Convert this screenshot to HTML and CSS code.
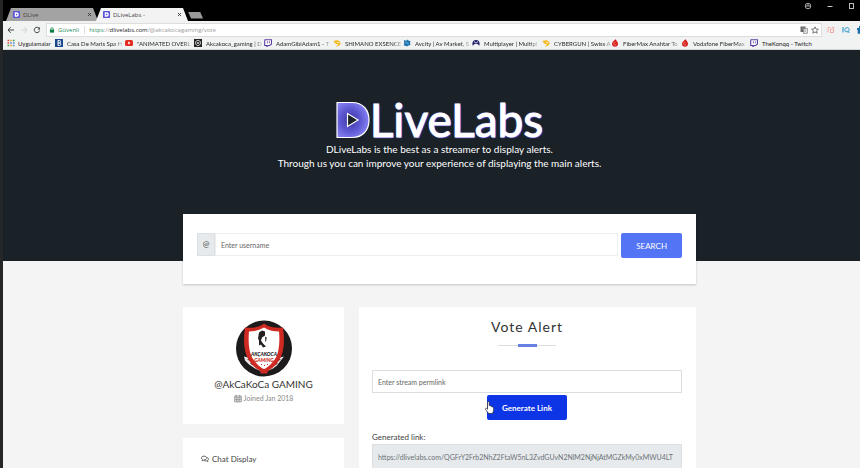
FILE: index.html
```html
<!DOCTYPE html>
<html lang="tr">
<head>
  <meta charset="UTF-8" />
  <meta name="viewport" content="width=device-width, initial-scale=1.0"/>
  <title>DLiveLabs - Vote Alert</title>
  <link rel="stylesheet" href="styles.css">
</head>
<body>
  <svg class="sprite" aria-hidden="true">
    <symbol id="i-dlive" viewBox="0 0 8 8"><rect width="8" height="8" rx="1" fill="#5a55d6"/><path d="M2 1.5h2.2a2.5 2.5 0 0 1 0 5H2z" fill="#fff"/><path d="M3.4 2.8v2.4L5.4 4z" fill="#5a55d6"/></symbol>
    <symbol id="i-close" viewBox="0 0 8 8"><path d="M1.500 1.500l5 5M6.500 1.500l-5 5" stroke="#333" stroke-width="1.300"/></symbol>
    <symbol id="i-twitch" viewBox="0 0 8 8"><path d="M1 .7h6.500v4.300L5.700 6.500H4L2.800 7.700V6.500H.7V2z" fill="#fff" stroke="#5b3fa0" stroke-width="1.100"/><path d="M3.400 2.300v2M5.400 2.300v2" stroke="#5b3fa0" stroke-width=".8"/></symbol>
    <symbol id="i-shop" viewBox="0 0 8 8"><path d="M.5 1.500c1.500 1 2.500-.7 4-.3C6.300 1.600 7.600 3 7.500 4.600 7.300 6.600 5 7.800 2.500 7.400c1.500-.5 2.300-1.200 2.300-2.200C3.200 5.500 1 4 .5 1.500z" fill="#f5b921"/><path d="M4 3.500l2 .3" stroke="#fff" stroke-width=".8"/></symbol>
    <symbol id="i-drop" viewBox="0 0 8 8"><path d="M4.500.3C5.500 1.800 7 3 7 4.800a3 3 0 0 1-6 0C1 3 3 1.800 4.500.3z" fill="#d8221d"/><path d="M4.300 3.400a1.300 1.300 0 1 0 .9 2" stroke="#f3a9a4" stroke-width=".6" fill="none"/></symbol>
  </svg>

  <div class="browser">
    <header class="titlebar">
      <div class="tab tab-idle"><svg class="fav"><use href="#i-dlive"/></svg><span>DLive</span><button aria-label="Close DLive"><svg><use href="#i-close"/></svg></button></div>
      <div class="tab tab-active"><svg class="fav"><use href="#i-dlive"/></svg><span>DLiveLabs -</span><button aria-label="Close DLiveLabs"><svg><use href="#i-close"/></svg></button></div>
      <button class="new-tab" aria-label="New tab"></button>
      <div class="window-buttons">
        <button aria-label="Account"><svg viewBox="0 0 8 8"><circle cx="4" cy="4" r="2.800" fill="none" stroke="#aaa"/><path d="M1.500 4h5M4 2v2" stroke="#aaa"/></svg></button>
        <button aria-label="Minimize"><svg viewBox="0 0 8 8"><path d="M1.500 4.500h5" stroke="#ccc"/></svg></button>
        <button aria-label="Maximize"><svg viewBox="0 0 8 8"><rect x="1.500" y="1.500" width="4" height="5" fill="none" stroke="#bbb"/></svg></button>
      </div>
    </header>

    <div class="toolbar">
      <button aria-label="Back"><svg viewBox="0 0 8 8"><path d="M7 4H1M3.700 1.200L1 4l2.700 2.800" fill="none" stroke="#444"/></svg></button>
      <button aria-label="Forward"><svg viewBox="0 0 8 8"><path d="M1 4H7M4.300 1.200L7 4 4.300 6.800" fill="none" stroke="#d2d2d2"/></svg></button>
      <button aria-label="Reload"><svg viewBox="0 0 8 8"><path d="M6.200 2.400A2.700 2.700 0 1 0 6.600 4.500" fill="none" stroke="#444"/><path d="M7 .9v2.600H4.400z" fill="#444"/></svg></button>
      <div class="omnibox">
        <svg class="lock" viewBox="0 0 8 8"><path d="M2.400 4V2.500a1.600 1.600 0 0 1 3.200 0V4" fill="none" stroke="#0b8043"/><rect x="1.200" y="3.500" width="5.600" height="4" fill="#0b8043"/></svg>
        <span class="secure">Güvenli</span>
        <span class="url"><span class="secure">https</span>://<b>dlivelabs.com</b>/@akcakocagaming/vote</span>
        <svg viewBox="0 0 8 8"><rect width="5" height="5.500" x=".5" y=".5" fill="#666"/><rect x="3.500" y="2.500" width="4" height="5" fill="#eee" stroke="#777" stroke-width=".6"/><path d="M1.500 4.300L3 1.500l1 2.500M4.500 4h2M5.500 3.500L4.500 6.500M5 5l1.500 1.500" stroke="#999" stroke-width=".6" fill="none"/></svg>
        <svg viewBox="0 0 8 8"><path d="M4 .8l1 2.200 2.400.2-1.800 1.600.6 2.400L4 6 1.800 7.200l.6-2.400L.6 3.200 3 3z" fill="none" stroke="#555" stroke-width=".8"/></svg>
      </div>
      <div class="extensions">
        <svg viewBox="0 0 8 8"><path d="M1 1.500v5M1 1.500h2.500M3.500 3v4M3.500 3h3v3.500h-3M5 1l2.500 1" fill="none" stroke="#efa9a4"/></svg>
        <svg viewBox="0 0 8 8"><path d="M1 1v5.500" stroke="#3b9bd0" stroke-width="1.200"/><circle cx="5" cy="3.800" r="2.200" fill="none" stroke="#3b9bd0"/><path d="M5.300 4.700l2 2.300" stroke="#3b9bd0"/></svg>
        <svg viewBox="0 0 8 8"><path d="M0 2h8v2H0zM.7 4h6.600v3.700H.7zM2 0h4v2H2z" fill="#1b6fa8"/></svg>
      </div>
    </div>

    <nav class="bookmarks">
      <a href="#" class="apps"><svg viewBox="0 0 8 8"><path d="M.5 1.500h1.700M.5 4h1.700" stroke="#d9503f" stroke-width="1.600"/><path d="M3.200 1.500h1.700M3.200 6.500h1.700" stroke="#e3a62f" stroke-width="1.600"/><path d="M5.900 1.500h1.700M.5 6.500h1.700" stroke="#4a9c59" stroke-width="1.600"/><path d="M3.200 4h1.700M5.900 4h1.700M5.900 6.500h1.700" stroke="#5f8fd3" stroke-width="1.600"/></svg><span>Uygulamalar</span></a>
      <a href="#"><svg viewBox="0 0 8 8"><rect width="8" height="8" fill="#174a8c"/><path d="M3 1.500v5h1.500a1.200 1.200 0 0 0 0-2.500H3M3 1.500h1.300a1.200 1.200 0 0 1 0 2.500" fill="none" stroke="#fff"/></svg><span>Casa De Maris Spa H</span></a>
      <a href="#"><svg viewBox="0 0 8 8"><rect y="1" width="8" height="6" rx="1.500" fill="#e32b22"/><path d="M3.200 2.600v2.800L5.600 4z" fill="#fff"/></svg><span>"ANIMATED OVERL</span></a>
      <a href="#"><svg viewBox="0 0 8 8"><rect width="8" height="8" fill="#222"/><path d="M4 1.200l2.300 1.300v2.800L4 6.800 1.700 5.300V2.500z" fill="none" stroke="#eee" stroke-width=".8"/><circle cx="4" cy="4" r=".9" fill="#eee"/></svg><span>Akcakoca_gaming | D</span></a>
      <a href="#"><svg><use href="#i-twitch"/></svg><span>AdamGibiAdam1 - T</span></a>
      <a href="#"><svg><use href="#i-shop"/></svg><span>SHIMANO EXSENCE</span></a>
      <a href="#"><svg viewBox="0 0 8 8"><path d="M1 1l2 .7L5 .6l.6 1.200L7.500 2 7 4l.5 2-2 .4L4 7.500 2.500 6.800.7 6.500 1.200 4z" fill="#2474ad"/><path d="M2.500 3.500l3 1" stroke="#68b2dc"/></svg><span>Avcity | Av Market, S</span></a>
      <a href="#"><svg viewBox="0 0 8 8"><path d="M.7 6.800C-.3 3.500 1 1 4 1s4.300 2.500 3.300 5.800L5.500 5h-3z" fill="#25256e"/><path d="M2 2.500l2 1.700 2-1.700" fill="none" stroke="#fff" stroke-width=".8"/></svg><span>Multiplayer | Multipl</span></a>
      <a href="#"><svg><use href="#i-shop"/></svg><span>CYBERGUN | Swiss A</span></a>
      <a href="#"><svg><use href="#i-drop"/></svg><span>FiberMax Anahtar To</span></a>
      <a href="#"><svg><use href="#i-drop"/></svg><span>Vodafone FiberMax</span></a>
      <a href="#"><svg><use href="#i-twitch"/></svg><span>TheKonqq - Twitch</span></a>
    </nav>

    <main>
      <section class="hero">
        <h1 class="logo">
          <svg viewBox="0 0 34 38" role="img" aria-label="D">
            <defs><radialGradient id="dfill" cx=".42" cy=".5" r=".6"><stop offset="0" stop-color="#3e36a4"/><stop offset=".5" stop-color="#5b55cf"/><stop offset="1" stop-color="#8985f5"/></radialGradient></defs>
            <path d="M1 1.500H16C27 1.500 33 9 33 19s-6 17.500-17 17.500H1z" fill="url(#dfill)" stroke="#fff" stroke-width="1.200"/>
            <path d="M11.500 12.500v13L22 19z" fill="#1a2129" stroke="#fff" stroke-width="1.200"/>
          </svg><span>LiveLabs</span>
        </h1>
        <p>DLiveLabs is the best as a streamer to display alerts.<br>Through us you can improve your experience of displaying the main alerts.</p>
      </section>

      <div class="container">
        <form class="card search">
          <label for="username">@</label>
          <input type="text" id="username" placeholder="Enter username" />
          <button type="button" class="btn">SEARCH</button>
        </form>

        <div class="row">
          <aside>
            <div class="card profile">
              <svg class="avatar" viewBox="0 0 56 56" aria-hidden="true">
                <circle cx="28" cy="28" r="28" fill="#1d1a1b"/>
                <path d="M8 36l8 2-5 1 7 3-4 1 7 4 7 5 7-5 7-4-4-1 7-3-5-1 8-2-4 5-3 4-4 3-9 4-9-4-6-4-4-4z" fill="#e9e7e7"/>
                <path d="M28 3c5 4 12 5 19 4 2 14 1 25-4 33-4 6-9 10-15 12-6-2-11-6-15-12C8 32 7 21 9 7c7 1 14 0 19-4z" fill="#cf2a22"/>
                <path d="M28 7c5 3 10 4 15 4 1 11 0 20-3 26-3 5-7 9-12 12-5-3-9-7-12-12-3-6-4-15-3-26 5 0 10-1 15-4z" fill="#fff"/>
                <path d="M23 12l3-2 3 1v4l-3 2-1 3 2 3 3 3-3 1-2-3-2 1v-5l-1-2z" fill="#242021"/>
                <path d="M29 16l2 1-1 4h-1z" fill="#555"/>
                <path d="M24 51l4-3 4 3-1 2h-6z" fill="#cf2a22"/>
                <text x="28" y="35" class="crest">AKÇAKOCA</text>
                <text x="28" y="41" class="crest crest-red">GAMING</text>
                <path d="M25 44h1M28 45h1M31 44h1" stroke="#cf2a22"/>
              </svg>
              <h2>@AkCaKoCa GAMING</h2>
              <p><svg viewBox="0 0 9 9"><path d="M.8 1.800h7.400v6.500H.8zM.8 3.600h7.400M2.600.3v2M6.400.3v2M.8 5.900h7.400M3.200 3.600v4.700M5.700 3.600v4.700" fill="none" stroke="#777" stroke-width=".8"/></svg>Joined Jan 2018</p>
            </div>
            <nav class="card menu">
              <a href="#"><svg viewBox="0 0 9 8"><path d="M3.500.8C5.300.8 6.500 1.600 6.500 2.900S5.300 5 3.500 5L1.300 6l.4-1.300C.9 4.300.5 3.600.5 2.900.5 1.600 1.700.8 3.500.8z" fill="none" stroke="#444" stroke-width=".9"/><path d="M7.200 2.300c1.500.9 1.600 2.500.3 3.300l.4 1.200-1.700-.7c-1 .2-2 .1-2.700-.3" fill="none" stroke="#444" stroke-width=".9"/></svg>Chat Display</a>
            </nav>
          </aside>

          <section class="card alert">
            <h2>Vote Alert</h2>
            <div class="divider"></div>
            <input type="text" id="permlink" aria-label="Stream permlink" placeholder="Enter stream permlink" />
            <div class="action">
              <button type="button" class="btn btn-dark">Generate Link</button>
              <svg class="pointer" viewBox="0 0 9 13"><path d="M2.500 7V1.500c0-1.300 1.700-1.300 1.700 0v3c1 0 1.500.3 1.700.8.900-.1 1.400.2 1.500.8.800 0 1.200.3 1.200 1v2.500L7.500 12.500H3.700L.6 8.500C0 7.500 1 6.800 1.700 7.400l.8.8z" fill="#fff" stroke="#222" stroke-width=".7"/></svg>
            </div>
            <label for="generated">Generated link:</label>
            <input type="text" id="generated" readonly value="https://dlivelabs.com/QGFrY2Frb2NhZ2FtaW5nL3ZvdGUvN2NlM2NjNjAtMGZkMy0xMWU4LT" />
          </section>
        </div>
      </div>
    </main>
  </div>
</body>
</html>
```
FILE: styles.css
```css
* {
  box-sizing: border-box;
}

body {
  margin: 0;
  height: 100vh;
  overflow: hidden;
  background: #242628;
  font-family: Lato, "Open Sans", sans-serif;
  font-size: 8px;
  color: #444;
}

button, input {
  font-family: inherit;
}

a {
  color: inherit;
  text-decoration: none;
}

svg {
  flex: none;
}

.sprite {
  position: absolute;
  width: 0;
  height: 0;
}

.browser {
  margin-left: 3px;
  min-height: 100vh;
  background: #f4f4f4;
}

.titlebar, .toolbar, .bookmarks {
  display: flex;
  align-items: center;
  font-size: 6px;
}

.titlebar, .toolbar {
  font-family: "Open Sans", sans-serif;
}

.titlebar button, .toolbar button {
  display: flex;
  padding: 0;
  border: none;
  background: none;
}

.titlebar {
  height: 21px;
  padding: 0 4px 0 3px;
  background: #000;
}

.tab {
  display: flex;
  align-items: center;
  align-self: flex-end;
  gap: 3px;
  width: 92px;
  height: 13px;
  padding: 0 6px 0 7px;
  background: #a3a3a3;
  clip-path: polygon(0 100%, 5px 0, calc(100% - 5px) 0, 100% 100%);
}

.tab-active {
  margin-left: -2px;
  background: #f3f3f3;
}

.tab span {
  flex: 1;
}

.fav {
  width: 7px;
  height: 7px;
}

.tab button svg {
  width: 5px;
  height: 5px;
}

.titlebar .new-tab {
  width: 15px;
  height: 7px;
  margin-top: 9px;
  background: #9a9a9a;
  clip-path: polygon(0 0, 12px 0, 100% 100%, 3px 100%);
}

.window-buttons {
  display: flex;
  gap: 14px;
  margin: 0 0 9px auto;
}

.window-buttons svg {
  width: 8px;
  height: 8px;
}

.toolbar {
  gap: 5px;
  height: 17px;
  padding-left: 4px;
  background: #f1f2f2;
}

.toolbar svg {
  width: 8px;
  height: 8px;
}

.omnibox {
  display: flex;
  flex: 1;
  align-items: center;
  gap: 3px;
  height: 14px;
  padding: 0 2px;
  background: #fff;
  border: 1px solid #ddd;
}

.omnibox .lock {
  width: 6px;
  height: 6px;
}

.secure {
  color: #2b8f59;
}

.url {
  flex: 1;
  margin-left: 2px;
  padding-left: 4px;
  border-left: 1px solid #ddd;
  color: #999;
}

.url b {
  font-weight: normal;
  color: #222;
}

/* the last icon is cut by the screen edge */
.extensions {
  display: flex;
  gap: 7px;
  width: 33px;
  overflow: hidden;
}

.bookmarks {
  height: 12px;
  padding: 0 0 1px 4px;
  background: #f1f2f2;
  border-bottom: 1px solid #d5d8da;
  color: #222;
}

.bookmarks a {
  display: flex;
  align-items: center;
  gap: 4px;
  width: 69px;
  white-space: nowrap;
}

.bookmarks a:nth-child(even) {
  width: 70px;
}

.bookmarks .apps {
  width: 48px;
  gap: 3px;
}

.bookmarks svg {
  width: 8px;
  height: 8px;
}

.bookmarks span {
  background: linear-gradient(to right, #222 85%, #bbb);
  background-clip: text;
  color: transparent;
}

.bookmarks .apps span, .bookmarks a:last-child span {
  background: none;
  color: #222;
}

.hero {
  height: 211px;
  padding: 48px 0 0 16px;
  background: #1a2228;
  color: #fff;
  text-align: center;
}

.logo {
  display: flex;
  justify-content: center;
  align-items: center;
  height: 44px;
  margin: 0;
  font-size: 46px;
  font-weight: normal;
  line-height: 44px;
  text-shadow: 0 0 2px #6a60f0, 1px 1px 1px #5a50d8;
  -webkit-text-stroke: 1px #fff;
}

.logo svg {
  width: 34px;
  height: 38px;
}

.hero p {
  margin: 0;
  font-size: 10px;
  line-height: 14px;
}

.container {
  max-width: 529px;
  margin: -47px auto 0;
  padding-left: 16px;
}

.card {
  background: #fff;
}

.search {
  display: flex;
  align-items: flex-start;
  height: 70px;
  padding: 19px 14px;
  box-shadow: 0 1px 2px rgba(0, 0, 0, .2);
}

.search label {
  width: 18px;
  height: 23px;
  background: #e7eaec;
  border: 1px solid #dde0e3;
  line-height: 21px;
  text-align: center;
}

input {
  width: 100%;
  height: 23px;
  padding: 0 5px;
  border: 1px solid #dcdfe2;
  background: #fff;
  color: #6b7278;
  font-size: 7px;
  outline: none;
}

input::placeholder {
  color: #666;
}

.search input {
  flex: 1;
  margin-right: 3px;
  border-color: #eceef0;
}

.btn {
  height: 25px;
  padding: 0 15px;
  border: none;
  border-radius: 2px;
  background: #5374f5;
  color: #fff;
  font-size: 8px;
  cursor: pointer;
}

.row {
  display: grid;
  grid-template-columns: repeat(3, 1fr);
  gap: 15px;
  align-items: start;
  margin-top: 23px;
}

.profile {
  height: 117px;
  padding-top: 13px;
  text-align: center;
}

.avatar {
  display: block;
  width: 56px;
  height: 57px;
  margin: 0 auto;
}

.crest {
  fill: #1a1718;
  font: italic 900 5px Lato, sans-serif;
  text-anchor: middle;
}

.crest-red {
  fill: #cf2a22;
}

.profile h2 {
  margin: 0;
  font-size: 10px;
  font-weight: normal;
  line-height: 14px;
  color: #333;
}

.profile p {
  display: flex;
  justify-content: center;
  align-items: center;
  gap: 2px;
  margin: 0;
  font-size: 7px;
  line-height: 14px;
  color: #888;
}

.profile p svg {
  width: 8px;
  height: 9px;
}

.menu {
  margin-top: 14px;
  padding: 14px 18px;
}

.menu a {
  display: flex;
  align-items: center;
  gap: 3px;
  line-height: 14px;
}

.menu svg {
  width: 8px;
  height: 8px;
}

.alert {
  grid-column: span 2;
  padding: 10px 14px 20px 13px;
}

.alert h2 {
  margin: 0;
  font-size: 14px;
  font-weight: normal;
  line-height: 20px;
  letter-spacing: 1px;
  text-align: center;
  color: #333;
}

.divider {
  width: 58px;
  height: 3px;
  margin: 7px auto 23px;
  background: linear-gradient(#6480e0, #6480e0) center / 19px 3px no-repeat, linear-gradient(#ddd, #ddd) center / 100% 1px no-repeat;
}

.alert input {
  display: block;
}

.action {
  position: relative;
  width: fit-content;
  margin: 2px auto 11px;
}

.btn-dark {
  background: #0d35e6;
  font-weight: bold;
}

.pointer {
  position: absolute;
  left: -2px;
  top: 6px;
  width: 9px;
  height: 13px;
}

.alert label {
  display: block;
  line-height: 13px;
}

.alert input[readonly] {
  height: 25px;
  background: #e7eaec;
}
```
